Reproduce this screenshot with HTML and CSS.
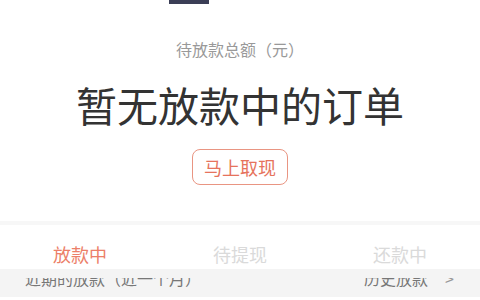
FILE: index.html
```html
<!DOCTYPE html>
<html lang="zh-CN">
<head>
<meta charset="utf-8">
<link rel="stylesheet" href="styles.css">
</head>
<body>
<div class="page">
  <div class="topstrip"><div class="topblock"></div></div>
  <div class="label">待放款总额（元）</div>
  <div class="title">暂无放款中的订单</div>
  <div class="btnrow"><span class="btn">马上取现</span></div>
  <div class="tabs">
    <div class="tab active">放款中</div>
    <div class="tab">待提现</div>
    <div class="tab">还款中</div>
  </div>
  <div class="listhead">
    <div class="clip">
      <div class="row">
        <span class="left">近期的放款（近一个月）</span>
        <span class="right">历史放款<span class="arrow">&gt;</span></span>
      </div>
    </div>
  </div>
</div>
</body>
</html>
```
FILE: styles.css
```css
html, body {
  margin: 0;
  padding: 0;
  background: #ffffff;
}
.page {
  width: 480px;
  height: 300px;
  overflow: hidden;
  font-family: "Noto Sans CJK SC", "Noto Sans", sans-serif;
}
.topstrip {
  display: flex;
  padding-left: 169px;
}
.topblock {
  width: 40px;
  height: 4px;
  background: #3b3e56;
}
.label {
  margin-top: 34px;
  text-align: center;
  font-size: 16px;
  line-height: 22px;
  color: #999999;
}
.title {
  margin-top: 16px;
  text-align: center;
  font-size: 41px;
  line-height: 56px;
  color: #333333;
}
.btnrow {
  margin-top: 17px;
  display: flex;
  justify-content: center;
}
.btn {
  box-sizing: border-box;
  height: 36px;
  padding: 0 11px;
  border: 1px solid #e99582;
  border-radius: 8px;
  font-size: 18px;
  line-height: 34px;
  color: #e6735c;
}
.tabs {
  margin-top: 36px;
  border-top: 4px solid #f7f7f7;
  display: flex;
  height: 48px;
  box-sizing: border-box;
  padding-top: 20px;
}
.tab {
  flex: 1;
  text-align: center;
  font-size: 18px;
  line-height: 18px;
  color: #dadada;
}
.tab.active {
  color: #ec7f69;
}
.listhead {
  background: #f4f4f4;
  height: 28px;
  padding-top: 9px;
  box-sizing: border-box;
}
.clip {
  overflow: hidden;
  height: 19px;
}
.row {
  margin-top: -8px;
  display: flex;
  justify-content: space-between;
  padding: 0 26px 0 25px;
  font-size: 16px;
  line-height: 16px;
  color: #777777;
}
.arrow {
  margin-left: 17px;
  color: #999999;
}
```
